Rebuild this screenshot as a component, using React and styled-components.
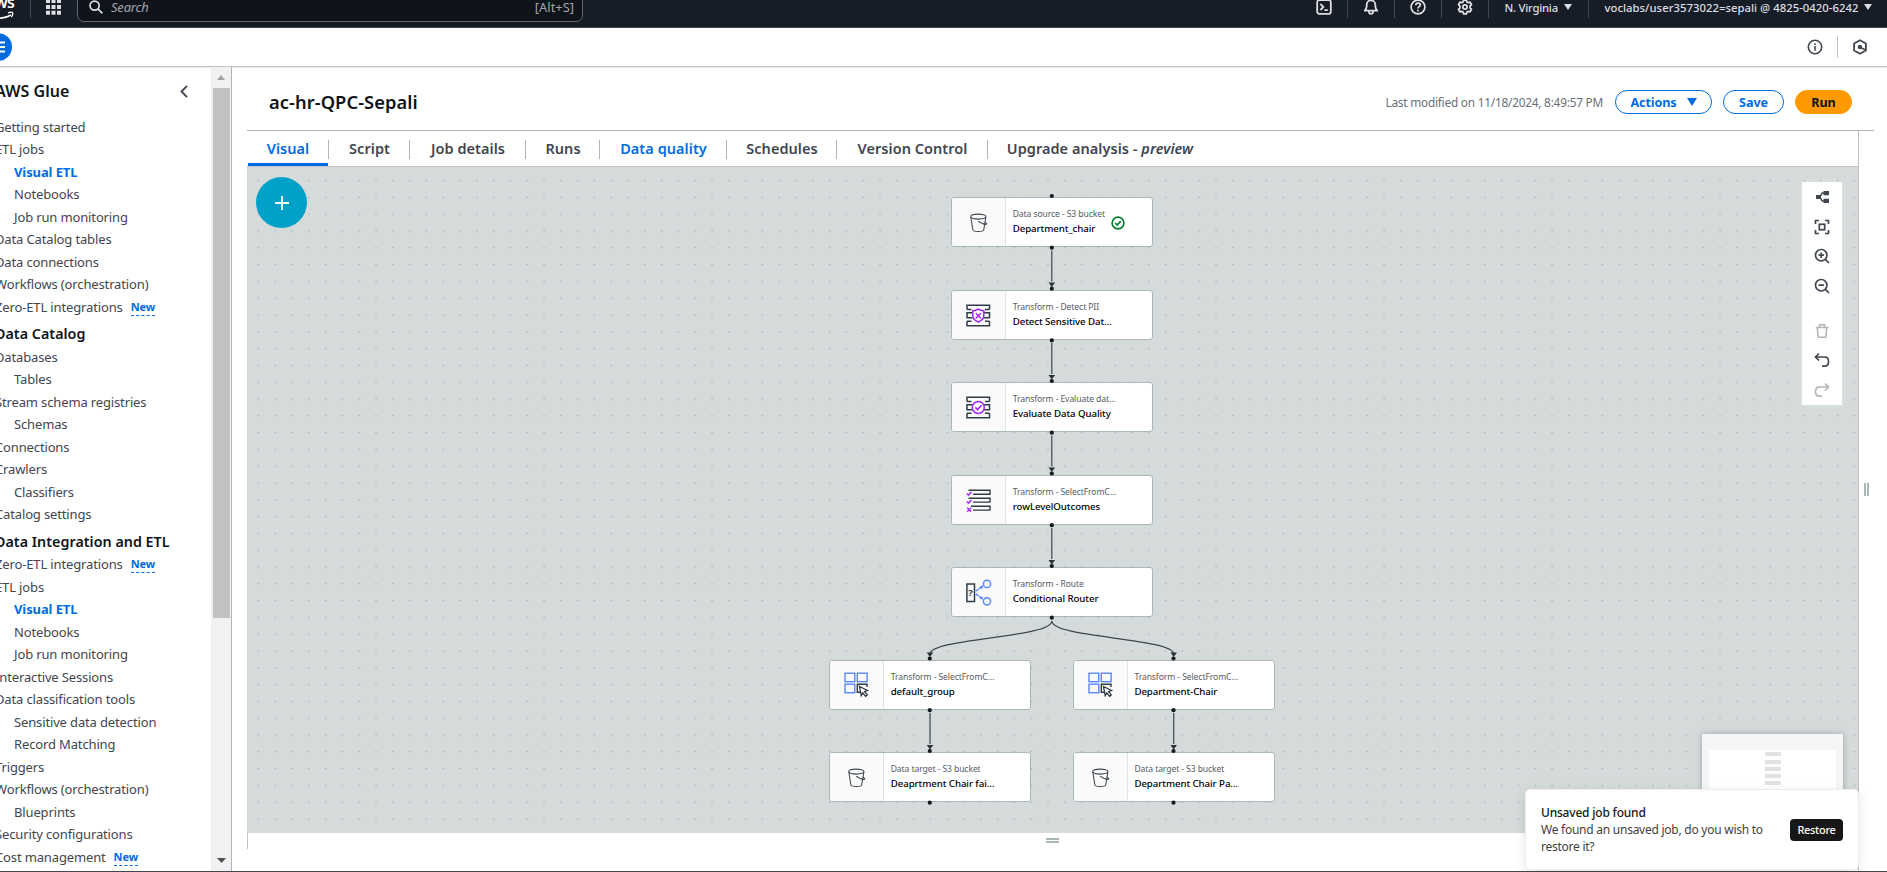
import React from "react";
import styled, { createGlobalStyle, css } from "styled-components";

const Global = createGlobalStyle`
  *, *::before, *::after { box-sizing: border-box; }
  html, body { margin: 0; padding: 0; overflow: hidden; }
  body {
    font-family: "Noto Sans", "Open Sans", sans-serif;
    background: #fff;
    color: #0f141a;
  }
  svg { display: block; }
`;

const Page = styled.div`
  display: flex;
  flex-direction: column;
  width: 1887px;
  height: 872px;
  overflow: hidden;
  border-bottom: 1px solid #424650;
`;

/* ---------- top navigation ---------- */

const TopNav = styled.header`
  display: flex;
  align-items: center;
  flex: none;
  height: 28px;
  padding-bottom: 13px;
  overflow: hidden;
  background: #161d26;
  border-bottom: 1px solid #424650;
  color: #dedee3;
`;

const Logo = styled.div`
  display: flex;
  flex-direction: column;
  align-items: flex-end;
  width: 30px;
  height: 26px;
  padding-right: 16px;
  color: #fff;
`;

const LogoWord = styled.span`
  font-size: 16px;
  line-height: 18px;
  font-weight: 600;
  letter-spacing: -0.8px;
  margin-top: -1px;
`;

const Rule = styled.span`
  flex: none;
  width: 1px;
  height: 22px;
  background: ${(p) => p.$color || "#424650"};
`;

const AppsButton = styled.div`
  display: flex;
  padding: 0 16px 0 15px;
`;

const SearchBox = styled.div`
  display: flex;
  align-items: center;
  flex: none;
  width: 506px;
  height: 30px;
  padding: 0 8px 0 11px;
  background: #0f141a;
  border: 1px solid #656871;
  border-radius: 7px;
`;

const SearchHint = styled.span`
  flex: 1;
  margin-left: 8px;
  font-size: 13px;
  font-style: italic;
  letter-spacing: -0.2px;
  color: #a4a4ad;
`;

const Shortcut = styled.span`
  font-size: 12.9px;
  color: #a4a4ad;
`;

const NavTools = styled.div`
  display: flex;
  align-items: center;
  margin-left: auto;
  padding-right: 15.5px;
`;

const NavCell = styled.div`
  display: flex;
  align-items: center;
  justify-content: center;
  width: 46.8px;
  height: 22px;
  border-right: 1px solid #424650;
`;

const NavMenu = styled.div`
  display: flex;
  align-items: center;
  gap: 6px;
  height: 22px;
  padding-left: 16px;
  width: ${(p) => p.$width}px;
  border-right: ${(p) => (p.$last ? "0" : "1px solid #424650")};
  font-size: 11.3px;
  font-weight: 500;
  letter-spacing: ${(p) => p.$spacing}px;
  white-space: nowrap;
`;

const Caret = styled.span`
  width: 0;
  height: 0;
  border-left: ${(p) => p.$half}px solid transparent;
  border-right: ${(p) => p.$half}px solid transparent;
  border-top: ${(p) => p.$height}px solid currentColor;
`;

/* ---------- secondary bar ---------- */

const ToolBar = styled.div`
  display: flex;
  align-items: center;
  flex: none;
  height: 39px;
  border-bottom: 1px solid #c0c0c8;
  box-shadow: 0 1px 0 #ececf0;
  color: #424650;
`;

const MenuToggle = styled.button`
  display: flex;
  align-items: center;
  justify-content: center;
  width: 28px;
  height: 28px;
  margin-left: -16px;
  padding: 0;
  border: 0;
  border-radius: 50%;
  background: #006ce0;
  color: #fff;
`;

const ToolBarEnd = styled.div`
  display: flex;
  align-items: center;
  gap: 14px;
  margin-left: auto;
  padding-right: 19px;
`;

const Body = styled.div`
  display: flex;
  flex: 1;
  min-height: 0;
`;

/* ---------- sidebar ---------- */

const Sidebar = styled.aside`
  display: flex;
  flex: none;
  width: 232px;
  border-right: 1px solid #b4b4bb;
`;

const Nav = styled.nav`
  width: 211px;
  overflow: hidden;
`;

const NavHeader = styled.div`
  display: flex;
  align-items: center;
  justify-content: space-between;
  height: 48.5px;
  padding: 0 23.5px 0 0;
  margin-left: -5px;
  color: #424650;
`;

const NavTitle = styled.h2`
  margin: 0;
  font-size: 16px;
  font-weight: 600;
  letter-spacing: 0.05px;
  color: #0f141a;
`;

const NavSection = styled.h3`
  height: 27.5px;
  margin: 0 0 0 -5px;
  padding-top: 4px;
  font-size: 14.3px;
  line-height: 23px;
  font-weight: 600;
  letter-spacing: 0.02px;
  color: #0f141a;
`;

const NavLink = styled.div`
  display: flex;
  align-items: center;
  height: 22.5px;
  padding-left: ${(p) => (p.$nested ? 14 : 0)}px;
  margin-left: ${(p) => (p.$nested ? 0 : -5)}px;
  font-size: 13px;
  letter-spacing: -0.14px;
  white-space: nowrap;
  color: #424650;
  ${(p) =>
    p.$active &&
    css`
      color: #006ce0;
      font-weight: 700;
      letter-spacing: -0.1px;
    `}
`;

const NewBadge = styled.span`
  margin: 1px 0 0 8px;
  border-bottom: 1px dashed #006ce0;
  font-size: 11px;
  line-height: 16px;
  font-weight: 700;
  letter-spacing: -0.1px;
  color: #006ce0;
`;

const ScrollTrack = styled.div`
  display: flex;
  flex-direction: column;
  align-items: center;
  width: 20px;
  background: #f1f1f1;
`;

const ScrollArrow = styled.div`
  display: flex;
  align-items: center;
  justify-content: center;
  height: 21px;
  color: ${(p) => (p.$down ? "#505050" : "#a3a3a3")};
  margin-top: ${(p) => (p.$down ? "auto" : "0")};
`;

const ScrollThumb = styled.div`
  width: 17px;
  height: 530px;
  background: #c1c1c1;
`;

/* ---------- editor ---------- */

const Main = styled.main`
  display: flex;
  flex-direction: column;
  flex: 1;
  padding-left: 15px;
`;

const JobHeader = styled.div`
  display: flex;
  align-items: center;
  flex: none;
  height: 64px;
  width: 1627px;
  padding: 7px 22px 0 22px;
  border-bottom: 1px solid #aab7b8;
`;

const JobTitle = styled.h1`
  flex: 1;
  margin: 0;
  font-size: 18.3px;
  line-height: 24px;
  font-weight: 600;
  letter-spacing: 0.08px;
`;

const Modified = styled.span`
  margin-right: 12px;
  padding-bottom: 1px;
  font-size: 11.8px;
  letter-spacing: -0.21px;
  color: #687078;
`;

const PillButton = styled.button`
  display: flex;
  align-items: center;
  justify-content: center;
  gap: 10px;
  width: ${(p) => p.$width}px;
  height: 24px;
  margin-left: ${(p) => (p.$first ? 0 : 11)}px;
  padding: 0;
  border: 1.6px solid ${(p) => (p.$primary ? "#ff9900" : "#006ce0")};
  border-radius: 12px;
  background: ${(p) => (p.$primary ? "#ff9900" : "#fff")};
  color: ${(p) => (p.$primary ? "#0f141a" : "#006ce0")};
  font-family: inherit;
  font-size: 12.6px;
  font-weight: 700;
  letter-spacing: -0.1px;
`;

const Workspace = styled.div`
  display: flex;
  flex: 1;
  min-height: 0;
`;

const Editor = styled.section`
  display: flex;
  flex-direction: column;
  width: 1612px;
  border-right: 1px solid #c0c0c8;
`;

const Tabs = styled.div`
  display: flex;
  flex: none;
  height: 36px;
  border-bottom: 1px solid #c0c0c8;
`;

const Tab = styled.div`
  display: flex;
  align-items: center;
  justify-content: space-between;
  width: ${(p) => p.$width}px;
  height: 35px;
  font-size: 14.5px;
  font-weight: 600;
  letter-spacing: 0.05px;
  white-space: nowrap;
  color: ${(p) => (p.$blue ? "#006ce0" : "#424650")};
  background: ${(p) =>
    p.$active
      ? "linear-gradient(#006ce0, #006ce0) 1px 100% / 80px 3px no-repeat"
      : "none"};
`;

const TabLabel = styled.span`
  flex: 1;
  padding-left: 1px;
  text-align: center;
  line-height: 20px;
  margin-bottom: 2px;
`;

const TabRule = styled.span`
  width: 1px;
  height: 19px;
  margin-top: 1px;
  background: #b4b4bb;
`;

const Canvas = styled.div`
  position: relative;
  flex: none;
  height: 666px;
  background: #d5dbdb;
  overflow: hidden;
`;

const Graph = styled.svg`
  position: absolute;
  inset: 0;
`;

const AddButton = styled.button`
  position: absolute;
  left: 9px;
  top: 10px;
  display: flex;
  align-items: center;
  justify-content: center;
  width: 51px;
  height: 51px;
  padding: 0;
  border: 0;
  border-radius: 50%;
  background: #00a1c9;
  color: #fff;
`;

const NodeCard = styled.div`
  position: absolute;
  display: flex;
  width: 201.5px;
  height: 50px;
  overflow: hidden;
  background: #fff;
  border: 1px solid #aab7b8;
  border-radius: 3px;
`;

const NodeIcon = styled.div`
  display: flex;
  align-items: center;
  justify-content: center;
  width: 54px;
  padding-top: 1.5px;
  background: #fafafa;
  border-right: 1px solid #dfe3e3;
`;

const NodeText = styled.div`
  display: flex;
  flex-direction: column;
  justify-content: center;
  padding: 0 0 0 6.4px;
  line-height: 14.8px;
  white-space: nowrap;
`;

const NodeType = styled.span`
  font-size: 8.6px;
  letter-spacing: -0.1px;
  color: #545b64;
`;

const NodeName = styled.span`
  font-size: 9.7px;
  font-weight: 500;
  letter-spacing: -0.08px;
  color: #000;
`;

const NodeStatus = styled.div`
  display: flex;
  align-items: center;
  margin-left: 6px;
  padding-top: 1px;
`;

const CanvasTools = styled.div`
  position: absolute;
  left: 1555px;
  top: 15px;
  display: flex;
  flex-direction: column;
  align-items: center;
  width: 40px;
  height: 223px;
  background: #fff;
  box-shadow: 0 0 6px rgba(255, 255, 255, 0.25);
`;

const CanvasTool = styled.div`
  display: flex;
  align-items: center;
  justify-content: center;
  width: 40px;
  height: 30px;
  padding-right: 1px;
  margin-top: ${(p) => (p.$gap ? 15 : 0)}px;
  color: ${(p) => (p.$disabled ? "#b4b4bb" : "#424650")};
`;

const MiniMap = styled.div`
  position: absolute;
  left: 1455px;
  top: 567px;
  width: 141px;
  height: 99px;
  padding: 16px 7px 0;
  background: #f5f5f5;
  box-shadow: 0 0 6px rgba(0, 28, 36, 0.3);
`;

const MiniView = styled.div`
  display: flex;
  flex-direction: column;
  align-items: center;
  gap: 3px;
  height: 83px;
  padding-top: 2px;
  background: #fff;
`;

const MiniNode = styled.span`
  width: 16px;
  height: 4px;
  background: #e2e2e2;
  &:first-child { margin-bottom: 1px; }
`;

const BottomPanel = styled.div`
  display: flex;
  align-items: flex-start;
  justify-content: center;
  flex: 1;
  background: linear-gradient(#c0c0c8, #c0c0c8) 0 0 / 1px 16px no-repeat;
  padding-top: 5px;
`;

const Grip = styled.span`
  width: ${(p) => (p.$vertical ? 5 : 13)}px;
  height: ${(p) => (p.$vertical ? 13 : 5)}px;
  border: 0 solid #aab7b8;
  border-width: ${(p) => (p.$vertical ? "0 2px" : "2px 0")};
`;

const SidePanel = styled.div`
  display: flex;
  flex: 1;
  padding: 352px 0 0 5px;
`;

/* ---------- toast ---------- */

const Toast = styled.div`
  position: absolute;
  left: 1525px;
  top: 789px;
  display: flex;
  align-items: center;
  justify-content: space-between;
  width: 334px;
  height: 81px;
  padding: 0 15px;
  background: #fff;
  border: 1px solid #ededed;
  border-radius: 5px;
  box-shadow: 0 3px 11px rgba(0, 0, 0, 0.1);
  color: #171717;
`;

const ToastText = styled.div`
  width: 230px;
  font-size: 12px;
  line-height: 17px;
  letter-spacing: -0.25px;
  color: #3f3f3f;
`;

const ToastTitle = styled.div`
  font-weight: 500;
  letter-spacing: -0.2px;
  color: #171717;
`;

const RestoreButton = styled.button`
  width: 53px;
  height: 22px;
  padding: 0;
  border: 0;
  border-radius: 4px;
  background: #171717;
  color: #fff;
  font-family: inherit;
  font-size: 11px;
  font-weight: 500;
  letter-spacing: -0.3px;
`;

/* ---------- icons ---------- */

const Icon = ({ size = 16, box = 16, width = 1.7, children }) => (
  <svg width={size} height={size} viewBox={`0 0 ${box} ${box}`} fill="none" stroke="currentColor" strokeWidth={width}>
    {children}
  </svg>
);

const Smile = () => (
  <svg width="22" height="9" viewBox="0 0 22 9" fill="none" stroke="#fff" strokeWidth="1.6">
    <path d="M0 4.5C6 8 13 7.6 19 4" />
    <path d="M16 1.8c2-.6 4-.8 4.6-.2.5.8-.2 3-1.2 4.6" strokeWidth="1.3" />
  </svg>
);

const GridIcon = () => (
  <svg width="15" height="16" viewBox="0 0 15 16" fill="currentColor">
    {[0, 5.5, 11].map((x) =>
      [0, 6, 11.7].map((y) => <rect key={`${x}-${y}`} x={x} y={y} width="4" height="4" />)
    )}
  </svg>
);

const SearchIcon = () => (
  <Icon size={14} width={1.9}>
    <circle cx="6.4" cy="6.4" r="5.2" />
    <path d="M10.2 10.2 15.3 15.3" />
  </Icon>
);

const ConsoleIcon = () => (
  <Icon size={16} width={1.8}>
    <rect x="1.2" y="1.2" width="13.6" height="13.6" rx="2" />
    <path d="M4.4 5 7.4 8l-3 3M8.4 11.1h3.4" />
  </Icon>
);

const BellIcon = () => (
  <Icon size={16} width={1.8}>
    <path d="M3.7 7V5.6a4.3 4.3 0 0 1 8.6 0V7c0 2 .8 3.4 1.9 4.7H1.8C2.9 10.4 3.7 9 3.7 7z" strokeLinejoin="round" />
    <path d="M6 12v1c0 1.1.9 1.9 2 1.9s2-.8 2-1.900v-1" />
  </Icon>
);

const HelpIcon = () => (
  <Icon size={16} width={1.7}>
    <circle cx="8" cy="8" r="6.9" />
    <path d="M5.7 6.3c.1-1.4 1-2.2 2.3-2.2 1.4 0 2.3.8 2.3 1.9 0 1.6-2.3 1.7-2.3 3.4M8 10.7v1.700" />
  </Icon>
);

const GearIcon = () => (
  <Icon size={16} width={1.8}>
    <path
      strokeLinejoin="round"
      d="M6.6 1.1h2.8l.5 1.9 1.3.7 1.9-.5 1.4 2.4-1.4 1.4v2l1.4 1.4-1.4 2.4-1.9-.5-1.3.7-.5 1.9H6.6L6.1 13l-1.3-.7-1.9.5-1.4-2.4L2.9 9V7L1.5 5.6l1.4-2.4 1.9.5L6.1 3z"
    />
    <circle cx="8" cy="8" r="2.1" />
  </Icon>
);

const LinesIcon = () => (
  <Icon size={14} box={14} width={2}>
    <path d="M0 2.5h14M0 7h14M0 11.5h14" />
  </Icon>
);

const InfoIcon = () => (
  <Icon size={16} width={1.6}>
    <circle cx="8" cy="8" r="6.7" />
    <path d="M8 7v4.8M8 4.2v1.7" />
  </Icon>
);

const HexIcon = () => (
  <Icon size={16} width={1.8}>
    <path d="M8 1.2 13.9 4.5v7L8 14.8 2.1 11.5v-7z" strokeLinejoin="round" />
    <circle cx="7.9" cy="8" r="1.3" fill="currentColor" />
    <path d="M8 8.2 13.6 11" />
  </Icon>
);

const ChevronIcon = () => (
  <svg width="8" height="13" viewBox="0 0 8 13" fill="none" stroke="currentColor" strokeWidth="1.9">
    <path d="M7 .8 1.5 6.5 7 12.2" />
  </svg>
);

const PlusIcon = () => (
  <Icon size={14} box={14} width={1.8}>
    <path d="M7 0v14M0 7h14" />
  </Icon>
);

const BucketIcon = () => (
  <svg width="18" height="20" viewBox="0 0 18 20" fill="none" stroke="#414952" strokeWidth="1.1">
    <ellipse cx="8.3" cy="3.6" rx="7.6" ry="2.5" />
    <path d="M.8 4 2.9 17c.3 2 10.500 2 10.800 0L15.9 4" />
    <path d="M8.2 8.3c3 2 6.500 3.400 8.300 2.900.7-.3-.3-1.100-1.600-1.900" />
  </svg>
);

const Slats = ({ children }) => (
  <svg width="25" height="23" viewBox="0 0 25 23" fill="none" stroke="#2f3a47" strokeWidth="1.5">
    <path d="M1 5.500V1.200h22.500v4.300M1 5.500h4.500M23.500 5.500H19" />
    <path d="M1 8.700h5.500M1 13.700h5.500M1 8v6.300M23.500 8.700H18M23.500 13.700H18M23.500 8v6.300" />
    <path d="M1 17.300v4.500h22.500v-4.500M1 17.300h4.500M23.500 17.300H19" />
    {children}
  </svg>
);

const PiiIcon = () => (
  <Slats>
    <path stroke="#a61fff" fill="#fff" d="M12.3 5.2c1.6 1.2 3.4 1.500 5.500 1.500v5c0 3-2.500 5-5.500 6.300-3-1.300-5.500-3.300-5.500-6.300v-5c2.100 0 3.900-.3 5.500-1.500z" />
    <path stroke="#a61fff" strokeWidth="1.3" d="m9.800 9.200 5 5M14.800 9.200l-5 5" />
  </Slats>
);

const QualityIcon = () => (
  <Slats>
    <circle cx="12.3" cy="11.4" r="6" stroke="#a61fff" fill="#fff" />
    <path stroke="#a61fff" d="m9.300 11.400 2.200 2.200 4-4.300" />
  </Slats>
);

const RowsIcon = () => (
  <svg width="26" height="23" viewBox="0 0 26 23" fill="none" stroke="#2f3a47" strokeWidth="1.4">
    <path d="M2.500 1.300H24v3.900H7M6 9.200h18v3.900H7M2.500 9.200H7M5 17.200h19v3.900H7" />
    <path stroke="#a030f5" strokeWidth="1.5" d="m.8 4.500 1.700 1.600L5.500 3M.8 12.500l1.700 1.600L5.500 11M1.200 18.700l4 4M5.200 18.700l-4 4" />
  </svg>
);

const QuestionMark = styled.text`
  font: 700 9.5px "Noto Sans", sans-serif;
`;

const RouterIcon = () => (
  <svg width="26" height="27" viewBox="0 0 26 27" fill="none" strokeWidth="1.5">
    <rect x=".9" y="5" width="7.6" height="17.5" stroke="#2f3a47" />
    <QuestionMark x="2.3" y="17.2" fill="#2f3a47">?</QuestionMark>
    <g stroke="#5a87f7">
      <circle cx="21" cy="4.9" r="3.6" />
      <circle cx="21" cy="22.3" r="3.6" />
      <path d="m10 12 6-4.200M10 15.200l6 4.200" strokeDasharray="3 .8" />
    </g>
    <path fill="#5a87f7" d="m17.300 6.800-1.200 3.400-2.300-3.200zM17.300 20.400l-3.500-.3 2.300-3.100z" />
  </svg>
);

const SelectIcon = () => (
  <svg width="25" height="26" viewBox="0 0 25 26" fill="none" stroke="#5a87f7" strokeWidth="1.4">
    <rect x="1" y="1.2" width="9.8" height="8.5" />
    <rect x="13.3" y="1.2" width="9.8" height="8.5" />
    <rect x="1" y="12.2" width="9.8" height="8.5" />
    <path stroke="#2f3a47" d="M16 20.300h-2.700v-8.100H23V15" />
    <path stroke="#2f3a47" fill="#fff" strokeWidth="1.3" d="m15.500 14.500 8 4-3 1 2.800 3.400-1.700 1.500-2.800-3.500-1.600 2.700z" />
  </svg>
);

const CheckBadge = () => (
  <svg width="14" height="14" viewBox="0 0 14 14" fill="none" stroke="#00802f" strokeWidth="1.6">
    <circle cx="7" cy="7" r="5.9" />
    <path d="m4.200 7 2 2 3.600-3.900" />
  </svg>
);

const LayoutIcon = () => (
  <Icon width={1.5}>
    <path fill="currentColor" stroke="none" d="M2 6h5v4H2zM9.500 2H15v4.200H9.500zM9.500 9.800H15V14H9.500z" />
    <path d="M10 4H8.200L6 8l2.200 4H10" />
  </Icon>
);

const FitIcon = () => (
  <Icon>
    <path d="M1.500 5V1.500H5M11 1.500h3.500V5M14.500 11v3.500H11M5 14.500H1.500V11" />
    <rect x="5.3" y="5.3" width="5.4" height="5.4" />
  </Icon>
);

const ZoomIcon = ({ plus }) => (
  <Icon>
    <circle cx="7.2" cy="7.2" r="5.7" />
    <path d="M11.300 11.300 15 15M4.500 7.200h5.400" />
    {plus && <path d="M7.200 4.500v5.400" />}
  </Icon>
);

const TrashIcon = () => (
  <Icon width={1.6}>
    <path d="M1.700 4.500h12.600M5.500 4.200V1.700h5v2.500M3.300 4.800l.9 9.500h7.600l.9-9.500" />
  </Icon>
);

const UndoIcon = () => (
  <Icon>
    <path d="M5 1.500 1.500 5 5 8.500M1.800 5h8.700c2.500 0 4 1.800 4 4.500s-1.600 4.700-4 4.700H8" />
  </Icon>
);

const RedoIcon = () => (
  <Icon>
    <path d="M11 1.500 14.500 5 11 8.500M14.200 5H5.500c-2.500 0-4 1.800-4 4.500s1.600 4.700 4 4.700H8" />
  </Icon>
);

/* ---------- data ---------- */

const links = [
  { label: "Getting started" },
  { label: "ETL jobs" },
  { label: "Visual ETL", nested: true, active: true },
  { label: "Notebooks", nested: true },
  { label: "Job run monitoring", nested: true },
  { label: "Data Catalog tables" },
  { label: "Data connections" },
  { label: "Workflows (orchestration)" },
  { label: "Zero-ETL integrations", isNew: true },
  { section: "Data Catalog" },
  { label: "Databases" },
  { label: "Tables", nested: true },
  { label: "Stream schema registries" },
  { label: "Schemas", nested: true },
  { label: "Connections" },
  { label: "Crawlers" },
  { label: "Classifiers", nested: true },
  { label: "Catalog settings" },
  { section: "Data Integration and ETL" },
  { label: "Zero-ETL integrations", isNew: true },
  { label: "ETL jobs" },
  { label: "Visual ETL", nested: true, active: true },
  { label: "Notebooks", nested: true },
  { label: "Job run monitoring", nested: true },
  { label: "Interactive Sessions" },
  { label: "Data classification tools" },
  { label: "Sensitive data detection", nested: true },
  { label: "Record Matching", nested: true },
  { label: "Triggers" },
  { label: "Workflows (orchestration)" },
  { label: "Blueprints", nested: true },
  { label: "Security configurations" },
  { label: "Cost management", isNew: true },
];

const tabs = [
  { label: "Visual", width: 82, active: true },
  { label: "Script", width: 81 },
  { label: "Job details", width: 116 },
  { label: "Runs", width: 74 },
  { label: "Data quality", width: 127, blue: true },
  { label: "Schedules", width: 110 },
  { label: "Version Control", width: 151 },
  { label: "Upgrade analysis - ", preview: "preview", width: 223, last: true },
];

const nodes = [
  { x: 704.3, y: 30, icon: BucketIcon, type: "Data source - S3 bucket", name: "Department_chair", ok: true },
  { x: 704.3, y: 122.7, icon: PiiIcon, type: "Transform - Detect PII", name: "Detect Sensitive Dat…" },
  { x: 704.3, y: 215, icon: QualityIcon, type: "Transform - Evaluate dat…", name: "Evaluate Data Quality" },
  { x: 704.3, y: 307.5, icon: RowsIcon, type: "Transform - SelectFromC…", name: "rowLevelOutcomes" },
  { x: 704.3, y: 400, icon: RouterIcon, type: "Transform - Route", name: "Conditional Router" },
  { x: 582.3, y: 492.5, icon: SelectIcon, type: "Transform - SelectFromC…", name: "default_group" },
  { x: 826, y: 492.5, icon: SelectIcon, type: "Transform - SelectFromC…", name: "Department-Chair" },
  { x: 582.3, y: 585, icon: BucketIcon, type: "Data target - S3 bucket", name: "Deaprtment Chair fai…" },
  { x: 826, y: 585, icon: BucketIcon, type: "Data target - S3 bucket", name: "Department Chair Pa…" },
];

const straight = [
  [804.8, 80.5],
  [804.8, 173],
  [804.8, 265.5],
  [804.8, 358],
  [683, 543],
  [926.7, 543],
];

const arrows = [...straight.map(([x, y]) => [x, y + 35.5]), [683, 486], [926.7, 486]];

const ports = nodes.flatMap(({ x, y }) => [
  { x: x + 100.5, y: y - 1 },
  { x: x + 100.5, y: y + 50.7 },
]);

const Edges = () => (
  <Graph width="1611" height="666" viewBox="0 0 1611 666">
    <defs>
      <pattern id="dots" x="10.9" y="13" width="16.8" height="16.8" patternUnits="userSpaceOnUse">
        <rect width="1.1" height="1.1" fill="#949ea0" />
      </pattern>
    </defs>
    <rect width="1611" height="666" fill="url(#dots)" />
    <g fill="none" stroke="#3f474d" strokeWidth="1.2">
      {straight.map(([x, y]) => (
        <path key={`${x}-${y}`} d={`M${x} ${y + 3}V${y + 34}`} />
      ))}
      <path d="M804.8 454C804.8 471 683 471 683 487" />
      <path d="M804.8 454C804.8 471 926.7 471 926.7 487" />
    </g>
    {arrows.map(([x, y]) => (
      <path key={`${x}-${y}`} fill="#2c3338" d={`M${x - 3.3} ${y - 0.5}h6.6l-3.3 4.5z`} />
    ))}
  </Graph>
);

const Ports = () => (
  <Graph width="1611" height="666" viewBox="0 0 1611 666">
    {ports.map(({ x, y }) => (
      <circle key={`${x}-${y}`} cx={x} cy={y} r="2.1" fill="#16191f" />
    ))}
  </Graph>
);

/* ---------- page ---------- */

export default function App() {
  return (
    <Page>
      <Global />
      <TopNav>
        <Logo>
          <LogoWord>aws</LogoWord>
          <Smile />
        </Logo>
        <Rule />
        <AppsButton>
          <GridIcon />
        </AppsButton>
        <SearchBox>
          <SearchIcon />
          <SearchHint>Search</SearchHint>
          <Shortcut>[Alt+S]</Shortcut>
        </SearchBox>
        <NavTools>
          <NavCell><ConsoleIcon /></NavCell>
          <NavCell><BellIcon /></NavCell>
          <NavCell><HelpIcon /></NavCell>
          <NavCell><GearIcon /></NavCell>
          <NavMenu $width={100} $spacing={-0.25}>
            N. Virginia
            <Caret $half={4} $height={6.5} />
          </NavMenu>
          <NavMenu $width={283} $spacing={0.03} $last>
            voclabs/user3573022=sepali @ 4825-0420-6242
            <Caret $half={4} $height={6.5} />
          </NavMenu>
        </NavTools>
      </TopNav>

      <ToolBar>
        <MenuToggle><LinesIcon /></MenuToggle>
        <ToolBarEnd>
          <InfoIcon />
          <Rule $color="#c0c0c8" />
          <HexIcon />
        </ToolBarEnd>
      </ToolBar>

      <Body>
        <Sidebar>
          <Nav>
            <NavHeader>
              <NavTitle>AWS Glue</NavTitle>
              <ChevronIcon />
            </NavHeader>
            {links.map((link, i) =>
              link.section ? (
                <NavSection key={i}>{link.section}</NavSection>
              ) : (
                <NavLink key={i} $nested={link.nested} $active={link.active}>
                  {link.label}
                  {link.isNew && <NewBadge>New</NewBadge>}
                </NavLink>
              )
            )}
          </Nav>
          <ScrollTrack>
            <ScrollArrow>
              <svg width="8" height="5" viewBox="0 0 8 5" fill="currentColor"><path d="M0 5 4 0l4 5z" /></svg>
            </ScrollArrow>
            <ScrollThumb />
            <ScrollArrow $down>
              <svg width="9" height="5" viewBox="0 0 9 5" fill="currentColor"><path d="M0 0h9L4.5 5z" /></svg>
            </ScrollArrow>
          </ScrollTrack>
        </Sidebar>

        <Main>
          <JobHeader>
            <JobTitle>ac-hr-QPC-Sepali</JobTitle>
            <Modified>Last modified on 11/18/2024, 8:49:57 PM</Modified>
            <PillButton $width={97} $first>
              Actions
              <Caret $half={5} $height={8} />
            </PillButton>
            <PillButton $width={61}>Save</PillButton>
            <PillButton $width={57} $primary>Run</PillButton>
          </JobHeader>
          <Workspace>
            <Editor>
              <Tabs>
                {tabs.map((tab) => (
                  <Tab key={tab.label} $width={tab.width} $active={tab.active} $blue={tab.active || tab.blue}>
                    <TabLabel>
                      {tab.label}
                      {tab.preview && <i>{tab.preview}</i>}
                    </TabLabel>
                    {!tab.last && <TabRule />}
                  </Tab>
                ))}
              </Tabs>
              <Canvas>
                <Edges />
                {nodes.map(({ x, y, icon: NodeGlyph, type, name, ok }) => (
                  <NodeCard key={name} style={{ left: x, top: y }}>
                    <NodeIcon><NodeGlyph /></NodeIcon>
                    <NodeText>
                      <NodeType>{type}</NodeType>
                      <NodeName>{name}</NodeName>
                    </NodeText>
                    {ok && <NodeStatus><CheckBadge /></NodeStatus>}
                  </NodeCard>
                ))}
                <Ports />
                <AddButton><PlusIcon /></AddButton>
                <CanvasTools>
                  <CanvasTool><LayoutIcon /></CanvasTool>
                  <CanvasTool><FitIcon /></CanvasTool>
                  <CanvasTool><ZoomIcon plus /></CanvasTool>
                  <CanvasTool><ZoomIcon /></CanvasTool>
                  <CanvasTool $gap $disabled><TrashIcon /></CanvasTool>
                  <CanvasTool><UndoIcon /></CanvasTool>
                  <CanvasTool $disabled><RedoIcon /></CanvasTool>
                </CanvasTools>
                <MiniMap>
                  <MiniView>
                    <MiniNode /><MiniNode /><MiniNode /><MiniNode /><MiniNode />
                  </MiniView>
                </MiniMap>
              </Canvas>
              <BottomPanel><Grip /></BottomPanel>
            </Editor>
            <SidePanel><Grip $vertical /></SidePanel>
          </Workspace>
        </Main>
      </Body>

      <Toast>
        <ToastText>
          <ToastTitle>Unsaved job found</ToastTitle>
          We found an unsaved job, do you wish to restore it?
        </ToastText>
        <RestoreButton>Restore</RestoreButton>
      </Toast>
    </Page>
  );
}
